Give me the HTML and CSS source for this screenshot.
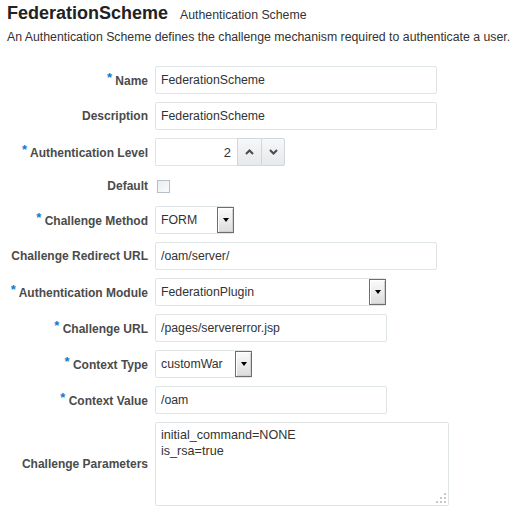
FILE: index.html
```html
<!DOCTYPE html>
<html lang="en">
<head>
    <meta charset="UTF-8">
    <meta name="viewport" content="width=device-width, initial-scale=1.0">
    <title>FederationScheme - Authentication Scheme</title>
    <link rel="stylesheet" href="styles.css">
</head>
<body>
    <!-- Page Header -->
    <header class="page-header">
        <h1>FederationScheme <span class="subtitle">Authentication Scheme</span></h1>
        <p class="intro">An Authentication Scheme defines the challenge mechanism required to authenticate a user.</p>
    </header>

    <!-- Scheme Form -->
    <form class="scheme-form">
        <label class="field-label"><span class="req">*</span> Name</label>
        <input class="text-input wide" type="text" value="FederationScheme">

        <label class="field-label">Description</label>
        <input class="text-input wide" type="text" value="FederationScheme">

        <label class="field-label"><span class="req">*</span> Authentication Level</label>
        <div class="spinner">
            <input class="spinner-value" type="text" value="2">
            <button type="button" class="spin-btn">
                <svg width="9" height="6" viewBox="0 0 9 6"><path d="M1 5 L4.5 1.5 L8 5" fill="none" stroke="#4a4a4a" stroke-width="2"/></svg>
            </button>
            <button type="button" class="spin-btn last">
                <svg width="9" height="6" viewBox="0 0 9 6"><path d="M1 1 L4.5 4.5 L8 1" fill="none" stroke="#4a4a4a" stroke-width="2"/></svg>
            </button>
        </div>

        <label class="field-label check-label">Default</label>
        <div class="check-row"><span class="checkbox"></span></div>

        <label class="field-label"><span class="req">*</span> Challenge Method</label>
        <div class="select method">
            <span class="select-text">FORM</span>
            <span class="select-btn"><span class="arrow"></span></span>
        </div>

        <label class="field-label">Challenge Redirect URL</label>
        <input class="text-input wide" type="text" value="/oam/server/">

        <label class="field-label"><span class="req">*</span> Authentication Module</label>
        <div class="select module">
            <span class="select-text">FederationPlugin</span>
            <span class="select-btn"><span class="arrow"></span></span>
        </div>

        <label class="field-label"><span class="req">*</span> Challenge URL</label>
        <input class="text-input medium" type="text" value="/pages/servererror.jsp">

        <label class="field-label"><span class="req">*</span> Context Type</label>
        <div class="select context">
            <span class="select-text">customWar</span>
            <span class="select-btn"><span class="arrow"></span></span>
        </div>

        <label class="field-label"><span class="req">*</span> Context Value</label>
        <input class="text-input medium" type="text" value="/oam">

        <label class="field-label">Challenge Parameters</label>
        <div class="params">
            <textarea class="params-text">initial_command=NONE
is_rsa=true</textarea>
            <svg class="grip" width="10" height="10" viewBox="0 0 10 10">
                <rect x="8" y="0" width="2" height="2" fill="#c8c8c8"/>
                <rect x="4" y="4" width="2" height="2" fill="#c8c8c8"/>
                <rect x="8" y="4" width="2" height="2" fill="#c8c8c8"/>
                <rect x="0" y="8" width="2" height="2" fill="#c8c8c8"/>
                <rect x="4" y="8" width="2" height="2" fill="#c8c8c8"/>
                <rect x="8" y="8" width="2" height="2" fill="#c8c8c8"/>
            </svg>
        </div>
    </form>
</body>
</html>
```

FILE: styles.css
```css
:root {
    --color-text: #333333;
    --color-label: #4b4b4b;
    --color-border: #dfe4e7;
    --color-required: #0b7ad1;
}

* {
    box-sizing: border-box;
    margin: 0;
    padding: 0;
}

body {
    background-color: #ffffff;
    color: var(--color-text);
    font-family: "Liberation Sans", Arial, sans-serif;
    font-size: 12.3px;
    padding: 3px 7px;
}

/* Header */
h1 {
    font-size: 18px;
    font-weight: bold;
    line-height: 20px;
    color: #222222;
}

.subtitle {
    font-size: 12.3px;
    font-weight: normal;
    color: #333333;
    margin-left: 7px;
}

.intro {
    line-height: 14px;
    margin-top: 5px;
    white-space: nowrap;
}

/* Form grid */
.scheme-form {
    display: grid;
    grid-template-columns: 141px auto;
    column-gap: 7px;
    row-gap: 8px;
    align-items: center;
    justify-items: start;
    margin-top: 22px;
}

.field-label {
    justify-self: end;
    font-size: 12px;
    font-weight: bold;
    color: var(--color-label);
    white-space: nowrap;
}

.req {
    color: var(--color-required);
    font-size: 13px;
    position: relative;
    top: -3px;
}

.text-input {
    height: 28px;
    border: 1px solid var(--color-border);
    border-radius: 2px;
    padding: 0 5px;
    font: inherit;
    color: var(--color-text);
    background: #ffffff;
    outline: none;
}

.wide {
    width: 282px;
}

.medium {
    width: 232px;
}

/* Spinner */
.spinner {
    display: flex;
    height: 28px;
}

.spinner-value {
    width: 82px;
    height: 28px;
    border: 1px solid var(--color-border);
    border-right: 0;
    border-radius: 2px 0 0 2px;
    padding: 0 6px;
    text-align: right;
    font: inherit;
    font-size: 13px;
    color: var(--color-text);
    outline: none;
}

.spin-btn {
    width: 24px;
    height: 28px;
    border: 1px solid #cfd6dc;
    border-right: 0;
    background: linear-gradient(#f6f7f8, #e6e9ec);
    display: flex;
    align-items: center;
    justify-content: center;
}

.spin-btn.last {
    border-right: 1px solid #cfd6dc;
    border-radius: 0 2px 2px 0;
}

/* Checkbox */
.check-row {
    height: 24px;
    display: flex;
    align-items: center;
    padding-left: 2px;
}

.checkbox {
    width: 13px;
    height: 13px;
    border: 1px solid #b9bfc4;
    background: linear-gradient(135deg, #e9ecee, #fbfbfb);
}

/* Select boxes */
.select {
    display: flex;
    align-items: center;
    height: 28px;
    border: 1px solid var(--color-border);
    border-radius: 2px;
    padding-left: 5px;
}

.method {
    width: 79px;
}

.module {
    width: 231px;
}

.context {
    width: 97px;
}

.select-text {
    flex: 1;
}

.select-btn {
    width: 17px;
    height: 26px;
    margin-right: -1px;
    border: 1px solid #6d6d6d;
    box-shadow: inset 1px 1px 0 #ffffff, inset -1px -1px 0 #d0d0d0;
    background: linear-gradient(#fbfbfb, #dcdcdc);
    display: flex;
    align-items: center;
    justify-content: center;
}

.arrow {
    width: 0;
    height: 0;
    border-left: 3.5px solid transparent;
    border-right: 3.5px solid transparent;
    border-top: 4px solid #000000;
}

/* Parameters textarea */
.params {
    position: relative;
}

.params-text {
    display: block;
    width: 294px;
    height: 84px;
    border: 1px solid var(--color-border);
    border-radius: 2px;
    padding: 4px 5px;
    font: inherit;
    font-size: 12.6px;
    line-height: 16px;
    color: var(--color-text);
    resize: none;
    outline: none;
}

.grip {
    position: absolute;
    right: 3px;
    bottom: 3px;
}
```
